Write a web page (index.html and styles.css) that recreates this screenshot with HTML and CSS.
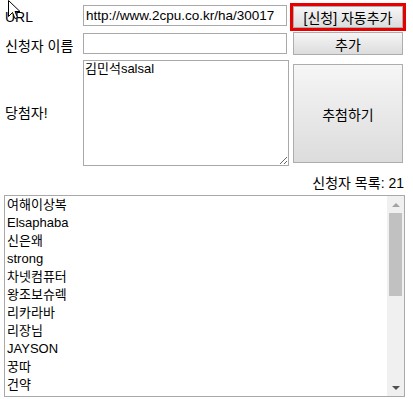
FILE: index.html
```html
<!DOCTYPE html>
<html lang="ko">
<head>
    <meta charset="UTF-8">
    <meta name="viewport" content="width=device-width, initial-scale=1.0">
    <title>추첨기</title>
    <link rel="stylesheet" href="styles.css">
</head>
<body>
    <div class="form">
        <label class="label">URL</label>
        <input class="field field-url" type="text" value="http://www.2cpu.co.kr/ha/30017">
        <button class="btn btn-auto">[신청] 자동추가</button>

        <label class="label">신청자 이름</label>
        <input class="field field-name" type="text">
        <button class="btn btn-add">추가</button>

        <label class="label">당첨자!</label>
        <textarea class="winner">김민석salsal</textarea>
        <button class="btn btn-draw">추첨하기</button>
    </div>

    <div class="count">신청자 목록: 21</div>

    <div class="listbox">
        <div class="items">
            <div class="item">여해이상복</div>
            <div class="item">Elsaphaba</div>
            <div class="item">신은왜</div>
            <div class="item">strong</div>
            <div class="item">차넷컴퓨터</div>
            <div class="item">왕조보슈렉</div>
            <div class="item">리카라바</div>
            <div class="item">리장님</div>
            <div class="item">JAYSON</div>
            <div class="item">꿍따</div>
            <div class="item">건약</div>
        </div>
        <div class="scrollbar">
            <div class="arrow arrow-up"></div>
            <div class="track"><div class="thumb"></div></div>
            <div class="arrow arrow-down"></div>
        </div>
    </div>

    <svg class="cursor" width="13" height="20" viewBox="0 0 13 20">
        <path d="M0.5 0.5 L0.5 16.5 L4.5 12.5 L7 18.5 L9.5 17.5 L7 11.5 L12 11.5 Z" fill="#fff" stroke="#000" stroke-width="1"/>
    </svg>
</body>
</html>
```

FILE: styles.css
```css
body {
    margin: 0;
    padding: 2px 8px 0 0;
    font-family: "Liberation Sans", "Noto Sans CJK KR", sans-serif;
    font-size: 14px;
    color: #000;
    background-color: #fff;
}
.form {
    display: grid;
    grid-template-columns: 79px 206px 110px;
    grid-template-rows: 30px 26px 108px;
    column-gap: 4px;
    align-items: start;
}
.label {
    align-self: center;
    padding-left: 5px;
    white-space: nowrap;
}
.field {
    box-sizing: border-box;
    width: 204px;
    height: 21px;
    margin: 0;
    padding: 0 2px;
    border: 1px solid #a9a9a9;
    font-family: "Liberation Sans", "Noto Sans CJK KR", sans-serif;
    font-size: 13.5px;
    color: #000;
    outline: none;
}
.field-url {
    margin-top: 3px;
}
.field-name {
    margin-top: 1px;
}
.winner {
    box-sizing: border-box;
    width: 206px;
    height: 106px;
    margin: 2px 0 0 0;
    padding: 0 1px;
    border: 1px solid #a9a9a9;
    font-family: "Liberation Sans", "Noto Sans CJK KR", sans-serif;
    font-size: 13px;
    line-height: 16px;
    color: #000;
    outline: none;
}
.btn {
    box-sizing: border-box;
    width: 110px;
    margin: 0;
    padding: 0;
    border: 1px solid #adadad;
    background: linear-gradient(#f6f6f6, #dcdcdc);
    font-family: "Liberation Sans", "Noto Sans CJK KR", sans-serif;
    font-size: 14px;
    color: #000;
}
.btn-auto {
    height: 22px;
    margin-top: 4px;
    outline: 3px solid #e60000;
}
.btn-add {
    height: 23px;
}
.btn-draw {
    height: 99px;
    margin-top: 6px;
}
.count {
    margin-top: 8px;
    height: 18px;
    line-height: 18px;
    text-align: right;
    padding-right: 1px;
}
.listbox {
    display: flex;
    margin: 3px 0 0 4px;
    height: 202px;
    box-sizing: border-box;
    border: 1px solid #a9a9a9;
    overflow: hidden;
}
.items {
    flex: 1;
    padding-left: 2px;
    font-size: 13px;
    overflow: hidden;
}
.item {
    height: 18px;
    line-height: 18px;
    white-space: nowrap;
}
.scrollbar {
    width: 17px;
    display: flex;
    flex-direction: column;
    background-color: #f0f0f0;
}
.arrow {
    height: 17px;
    display: flex;
    align-items: center;
    justify-content: center;
}
.arrow-up::before {
    content: "";
    border-left: 4px solid transparent;
    border-right: 4px solid transparent;
    border-bottom: 4px solid #a3a3a3;
}
.arrow-down::before {
    content: "";
    border-left: 4px solid transparent;
    border-right: 4px solid transparent;
    border-top: 4px solid #505050;
}
.track {
    flex: 1;
}
.thumb {
    margin: 0 2px;
    height: 83px;
    background-color: #c1c1c1;
}
.cursor {
    position: absolute;
    left: 8px;
    top: 0;
}
```
